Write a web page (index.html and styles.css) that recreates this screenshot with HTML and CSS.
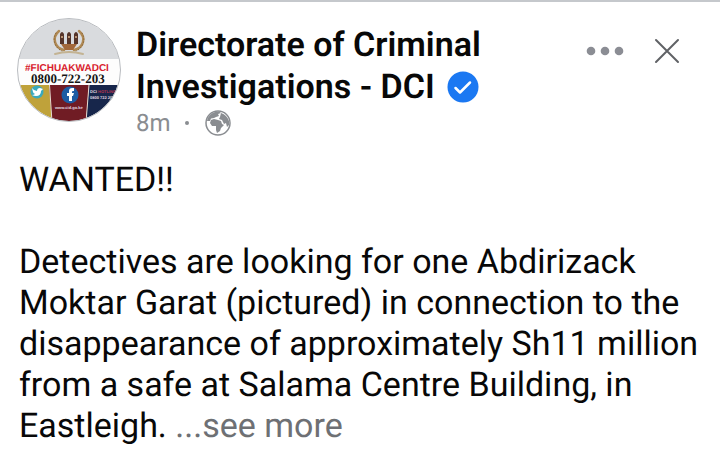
FILE: index.html
```html
<!DOCTYPE html>
<html lang="en">
<head>
<meta charset="utf-8">
<meta name="viewport" content="width=device-width, initial-scale=1">
<title>Directorate of Criminal Investigations - DCI</title>
<link rel="stylesheet" href="styles.css">
</head>
<body>
<article class="post">
  <header class="post-header">
    <svg class="avatar" viewBox="0 0 104 104" role="img" aria-label="DCI profile picture">
      <defs><clipPath id="round"><circle cx="52" cy="52" r="51"/></clipPath></defs>
      <g clip-path="url(#round)">
        <rect width="104" height="41" fill="#d9dbde"/>
        <rect y="41" width="104" height="26" fill="#fdfdfd"/>
        <path d="M0 67H33L35 104H0z" fill="#bfa23a"/>
        <path d="M32 67H72L69 104H35z" fill="#701c24"/>
        <path d="M72 67H104V104H69z" fill="#17264b"/>
        <path d="M32.500 67L35 104M72 67L69 104" stroke="#e6dcd0" stroke-width="1"/>
        <g fill="none" stroke="#b08a55" stroke-linecap="round">
          <path d="M42 13C34 20 38 30 47 32M62 13C70 20 66 30 57 32" stroke-width="2.500"/>
          <path d="M39 15C35 22 38 30 45 33M65 15C69 22 66 30 59 33" stroke="#8f6a3a" stroke-width="1" stroke-dasharray="1 2"/>
          <path d="M38 36Q52 32 66 36" stroke="#c3b393" stroke-width="2"/>
        </g>
        <path d="M43 16q2-4 4 0v10h-4zM50 16q2-4 4 0v10h-4zM57 16q2-4 4 0v10h-4z" fill="#56352a"/>
        <path d="M44 19h2M51 19h2M58 19h2" stroke="#d9b28c" stroke-width="1.500"/>
        <path d="M44 26h16l-4 6h-8z" fill="#a3683a"/>
        <text class="tag" x="8" y="53">#FICHUAKWADCI</text>
        <text class="phone" x="14" y="65">0800-722-203</text>
        <circle cx="20" cy="74" r="6.5" fill="#3aa9bd"/>
        <path d="M15 70q2 3 5 3q0-3 3-3l3 1-2 2q0 5-5 5-2 0-4-1 2 0 3-1-2-1-2-2z" fill="#fff"/>
        <circle cx="53" cy="77" r="8.5" fill="#1d5ca4"/>
        <path d="M52 83v-5h-2v-3h2v-2q0-3 3-3h2v3h-1q-1 0-1 1v1h2l-1 3h-1v5z" fill="#fff"/>
        <text class="tiny" x="73" y="75">DCI <tspan fill="#b83350">HOTLINE</tspan></text>
        <text class="tiny" x="73" y="81">0800 722 203</text>
        <text class="tiny" x="38" y="91">www.cid.go.ke</text>
      </g>
      <circle cx="52" cy="52" r="51.5" fill="none" stroke="#b9bcc0"/>
    </svg>
    <div class="identity">
      <h1 class="name">Directorate of Criminal Investigations - DCI
        <svg class="verified" viewBox="0 0 32 32" role="img" aria-label="Verified"><circle cx="16" cy="16" r="15.5" fill="#1b78f2"/><path d="M8.500 17l4.500 4.500 10-10" fill="none" stroke="#fff" stroke-width="2.500" stroke-linecap="round" stroke-linejoin="round"/></svg>
      </h1>
      <div class="meta">
        <span>8m</span><span class="dot"></span>
        <svg class="globe" viewBox="0 0 26 26" role="img" aria-label="Public"><circle cx="13" cy="13" r="12" fill="#fff" stroke="#8a8d91" stroke-width="1.500"/><g fill="#8a8d91"><path d="M5 5Q9 1 14 1.500L16 3 13 4 14 6 11 7 9 8 6 8.500 5 11 2 11Q2 8 5 5z"/><path d="M6 10L9 9 13 10 16 11 17 14 19 15 16 18 15 21 12 23 11 20 11 16 7 16 5 13z"/><path d="M16 3Q22 5 24 11L24 15 22 17 21 13 19 14 17 10 14 9 15 7z"/></g></svg>
      </div>
    </div>
    <div class="actions">
      <button class="icon-button" type="button" aria-label="More options"><svg class="more" viewBox="0 0 38 10"><g fill="#8b8d94"><circle cx="5" cy="5" r="4.300"/><circle cx="19" cy="5" r="4.300"/><circle cx="33" cy="5" r="4.300"/></g></svg></button>
      <button class="icon-button" type="button" aria-label="Close"><svg class="close" viewBox="0 0 26 26"><path d="M2 2L24 24M24 2L2 24" stroke="#606266" stroke-width="2" stroke-linecap="round"/></svg></button>
    </div>
  </header>
  <div class="content">
    <p>WANTED!!</p>
    <p>Detectives are looking for one Abdirizack Moktar Garat (pictured) in connection to the disappearance of approximately Sh11 million from a safe at Salama Centre Building, in Eastleigh. <a class="see-more" href="#">...see more</a></p>
  </div>
</article>
</body>
</html>
```
FILE: styles.css
```css
body {
  margin: 0;
  background: #fff;
  color: #080808;
  font-family: Roboto, "Liberation Sans", sans-serif;
  text-rendering: geometricPrecision;
}

.post {
  border-top: 2px solid #c5c8cc;
}

.post-header {
  display: flex;
  align-items: flex-start;
  padding: 16px 40px 0 17px;
}

.avatar {
  flex: none;
  width: 104px;
  height: 104px;
}

.tag {
  fill: #d8202c;
  font: bold 10px "Liberation Sans", sans-serif;
}

.phone {
  fill: #151515;
  font: bold 13px "Liberation Serif", serif;
}

.tiny {
  fill: #e3dde3;
  font: bold 4px "Liberation Sans", sans-serif;
}

.identity {
  flex: 1;
  padding: 6px 0 0 15px;
}

.name {
  margin: 0;
  max-width: 400px;
  font-size: 34px;
  font-weight: 600;
  line-height: 42px;
}

.verified {
  width: 32px;
  height: 32px;
  margin-left: 4px;
  vertical-align: -5px;
}

.meta {
  display: flex;
  align-items: center;
  color: #8a8d91;
  font-size: 24px;
  line-height: 30px;
}

.dot {
  width: 4px;
  height: 4px;
  margin: 0 16px 0 14px;
  border-radius: 50%;
  background: #8a8d91;
}

.globe {
  width: 26px;
  height: 26px;
}

.actions {
  display: flex;
  align-items: center;
  gap: 30px;
  padding-top: 20px;
}

.icon-button {
  padding: 0;
  border: 0;
  background: none;
  cursor: pointer;
}

.icon-button svg {
  display: block;
}

.more {
  width: 38px;
  height: 10px;
}

.close {
  width: 26px;
  height: 26px;
}

.content {
  padding: 22px 19px 0;
  font-size: 34px;
  line-height: 41px;
}

.content p {
  margin: 0 0 41px;
}

.content p:last-child {
  margin: 0;
}

.see-more {
  color: #6e7074;
  text-decoration: none;
}
```
